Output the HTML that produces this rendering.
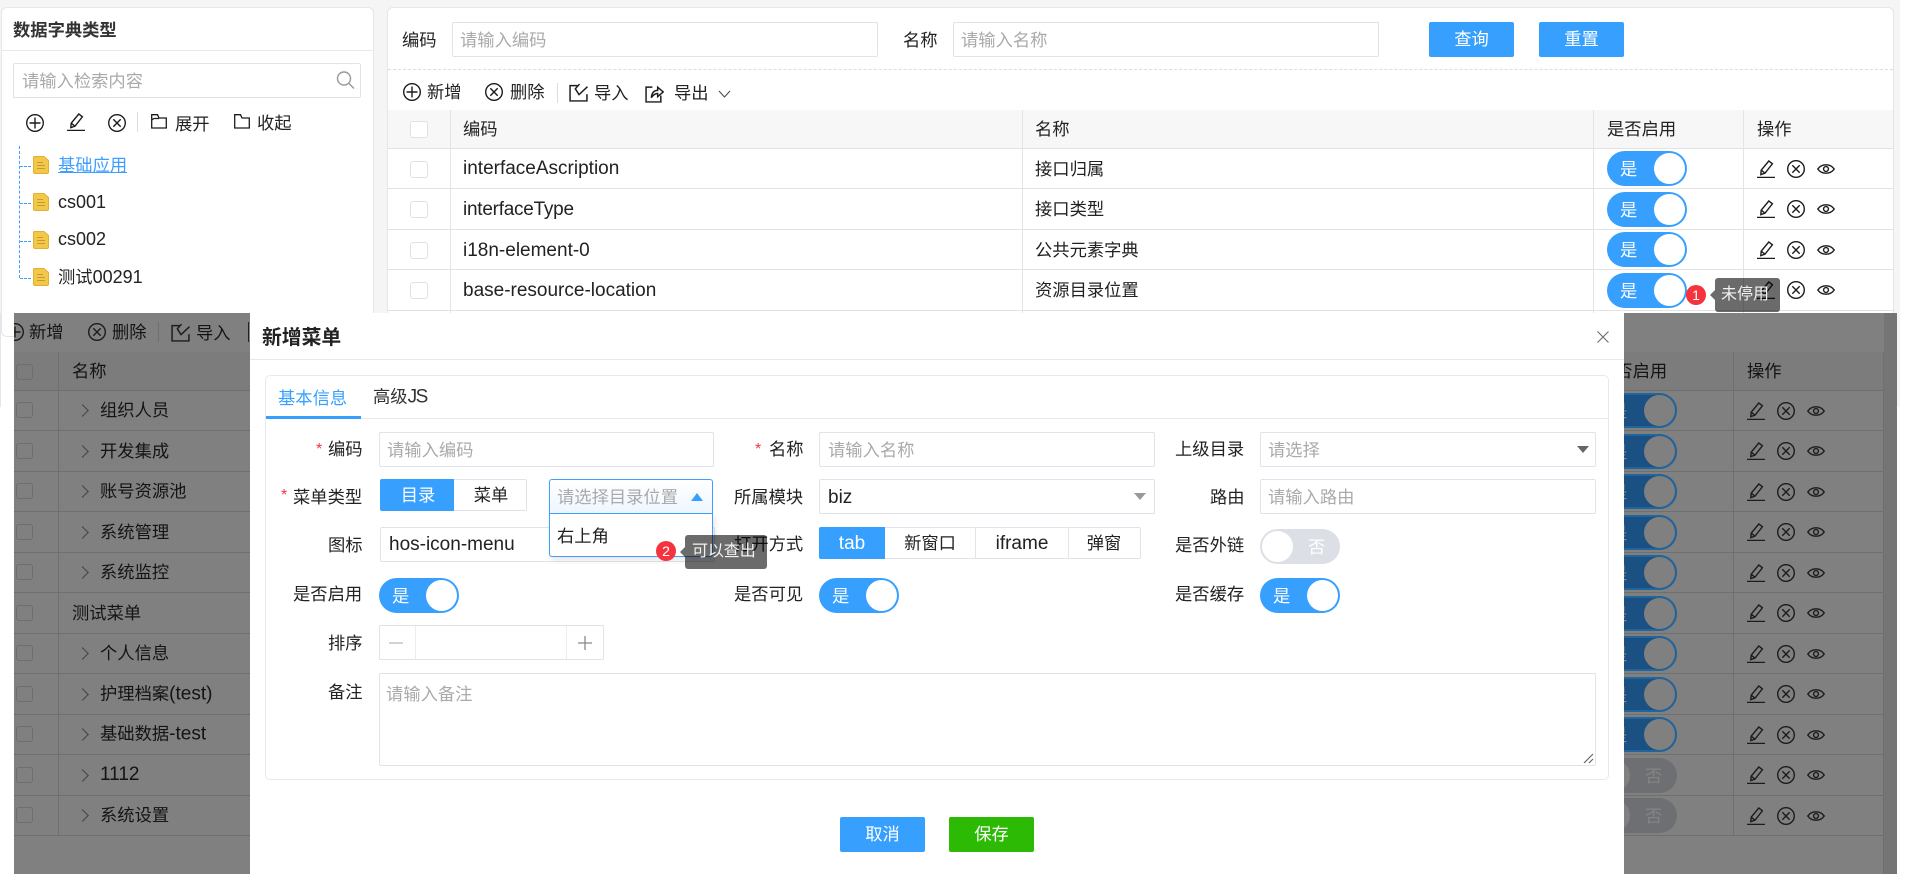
<!DOCTYPE html>
<html lang="zh-CN"><head><meta charset="utf-8"><title>数据字典类型</title>
<style>
html,body{margin:0;padding:0;width:1920px;height:874px;overflow:hidden;background:#fff}
body{position:relative;font-family:"Liberation Sans","Noto Sans CJK SC",sans-serif;font-size:17.3px;color:#222}
div,svg{position:absolute;box-sizing:border-box}
.t{white-space:nowrap;line-height:20px;transform:translateY(-50%)}
.c{transform:translate(-50%,-50%)}
.p{color:#aaa}
.l{font-size:19px}
.t.l{margin-top:1px}
.d{font-size:18px}
.card{background:#fff;border:1px solid #e4e6ec;border-radius:6px}
.in{background:#fff;border:1px solid #e1e2ea;border-radius:2px}
.btn{background:#37a0ff;border-radius:2px;height:35px;width:85px;color:#fff;text-align:center;line-height:35px}
.hl{height:1px;background:#e2e2e2}
.vl{width:1px;background:#e4e4e4}
.cb{width:18px;height:17px;border:1px solid #e2e2e2;border-radius:3px;background:#fff}
.i{width:18px;height:18px;overflow:visible;fill:none;stroke:#1c1c1c;stroke-width:1.4}
.sw{width:80px;height:35px;border-radius:18px;background:#37a0ff}
.sw i{position:absolute;right:2px;top:2px;width:31px;height:31px;border-radius:50%;background:#fff}
.sw b{position:absolute;left:13px;top:0;line-height:36px;font-weight:400;color:#fff}
.sd{background:#1b5182;box-shadow:inset 0 0 0 2px #22649c}
.sd i{background:#808080}
.sd b{color:#888}
.so{background:#6e6f73}
.so i{background:#808080;left:2px;right:auto}
.so b{left:48px;color:#858585}
.hd{height:1px;background:#6f6f6f}
.vd{width:1px;background:#6f6f6f}
.cd{width:17px;height:16px;border:1px solid #6e6e6e;border-radius:3px}
.ar{width:9px;height:9px;border-top:1px solid #444;border-right:1px solid #444;transform:rotate(45deg)}
.tip{background:rgba(0,0,0,.58);border-radius:3px}
.tip:before{content:"";position:absolute;left:-5px;top:50%;margin-top:-5px;border:5px solid transparent;border-left:0;border-right-color:rgba(0,0,0,.58)}
.bad{width:20px;height:20px;border-radius:50%;background:#f5333f;color:#fff;text-align:center;line-height:20px;font-size:14px}
.red{color:#f5333f}
</style></head><body>
<svg width="0" height="0" style="left:0;top:0">
<symbol id="plus" viewBox="0 0 18 18"><circle cx="9" cy="9" r="8.3"/><path d="M9 3.5V14.5M3.5 9H14.5"/></symbol>
<symbol id="x" viewBox="0 0 18 18"><circle cx="9" cy="9" r="8.3"/><path d="M5.3 5.3L12.7 12.7M12.7 5.300L5.300 12.700"/></symbol>
<symbol id="pen" viewBox="0 0 18 18"><path d="M3.800 14.600L4.200 10.200L11.800 1L15.400 3.800L8 13.200ZM4.200 10.200L8 13.200"/><path d="M0 17.400H18"/></symbol>
<symbol id="eye" viewBox="0 0 18 18"><path d="M.8 9C4.600 3.400 13.400 3.400 17.200 9C13.400 14.600 4.600 14.600 .8 9Z"/><circle cx="9" cy="9" r="2.400"/></symbol>
<symbol id="fo" viewBox="0 0 16 16"><path d="M.7 1.700H6.500L8 5H15.300V15H.7ZM.7 7L3 5.500H8"/></symbol>
<symbol id="fc" viewBox="0 0 16 16"><path d="M.7 1.700H6.500L8 5H15.300V15H.7Z"/></symbol>
<symbol id="imp" viewBox="0 0 18 18"><path d="M8 2.500H1V17H17V10.500"/><path d="M10 1L6 5.500L9.500 11L17.500 3.500"/></symbol>
<symbol id="exp" viewBox="0 0 18 18"><path d="M7 3H1V17H15V11"/><path d="M6 13C6.500 8 9 6 12 6V3L17.300 7.500L12 12V9C10 9 8 10 6 13Z"/></symbol>
<symbol id="doc" viewBox="0 0 16 18"><path d="M1.500 .5H11L15.500 4.500V16C15.500 17 15 17.500 14 17.500H2C1 17.500 .5 17 .5 16V1.500C.5 1 1 .5 1.500 .5Z" fill="#f2c84b" stroke="#e3b030"/><path d="M4 6.500H10M4 9.500H12M4 12.500H12" stroke="#c79a2a" stroke-width="1"/></symbol>
</svg>

<!-- page background -->
<div style="left:0;top:0;width:1900px;height:313px;background:#f5f5f5"></div>
<div style="left:1897px;top:313px;width:3px;height:94px;background:#f5f5f5"></div>
<div style="left:0;top:313px;width:1px;height:94px;background:#e4e6ec"></div>

<!-- left card -->
<div class="card" style="left:1px;top:7px;width:373px;height:330px"></div>
<div class="t" style="left:13px;top:30px;font-weight:700;color:#333;">数据字典类型</div>
<div style="left:1px;top:50px;width:373px;height:1px;background:#e8e9ee"></div>
<div class="in" style="left:13px;top:63px;width:348px;height:35px"></div>
<div class="t p" style="left:22px;top:81px">请输入检索内容</div>
<svg style="left:336px;top:71px;width:19px;height:18px;fill:none;stroke:#999;stroke-width:1.400"><circle cx="8" cy="7.500" r="6.500"/><path d="M12.500 12L18 17.500"/></svg>
<svg class="i" style="left:26px;top:114px"><use href="#plus"/></svg>
<svg class="i" style="left:67px;top:113px"><use href="#pen"/></svg>
<svg class="i" style="left:108px;top:114px"><use href="#x"/></svg>
<div class="vl" style="left:137px;top:112px;height:20px;background:#ddd"></div>
<svg class="i" style="left:151px;top:113px;width:16px;height:16px;stroke-width:1.300"><use href="#fo"/></svg>
<div class="t" style="left:175px;top:124px">展开</div>
<svg class="i" style="left:234px;top:113px;width:16px;height:16px;stroke-width:1.300"><use href="#fc"/></svg>
<div class="t" style="left:257px;top:123px">收起</div>
<div style="left:19px;top:146px;width:1px;height:132px;border-left:1px dashed #409eff"></div>
<div style="left:20px;top:166px;width:11px;border-top:1px dashed #409eff"></div>
<div style="left:20px;top:203px;width:11px;border-top:1px dashed #409eff"></div>
<div style="left:20px;top:241px;width:11px;border-top:1px dashed #409eff"></div>
<div style="left:20px;top:278px;width:11px;border-top:1px dashed #409eff"></div>
<svg style="left:33px;top:156px;width:16px;height:18px"><use href="#doc"/></svg>
<svg style="left:33px;top:193px;width:16px;height:18px"><use href="#doc"/></svg>
<svg style="left:33px;top:231px;width:16px;height:18px"><use href="#doc"/></svg>
<svg style="left:33px;top:268px;width:16px;height:18px"><use href="#doc"/></svg>
<div class="t" style="left:58px;top:165px;color:#409eff;text-decoration:underline">基础应用</div>
<div class="t d" style="left:58px;top:202px">cs001</div>
<div class="t d" style="left:58px;top:239px">cs002</div>
<div class="t" style="left:58px;top:277px">测试<span class="d">00291</span></div>

<!-- right card -->
<div class="card" style="left:387px;top:7px;width:1507px;height:330px"></div>
<div class="t" style="left:402px;top:40px">编码</div>
<div class="in" style="left:452px;top:22px;width:426px;height:35px"></div>
<div class="t p" style="left:460px;top:40px">请输入编码</div>
<div class="t" style="left:903px;top:40px">名称</div>
<div class="in" style="left:953px;top:22px;width:426px;height:35px"></div>
<div class="t p" style="left:961px;top:40px">请输入名称</div>
<div class="btn" style="left:1429px;top:22px">查询</div>
<div class="btn" style="left:1539px;top:22px">重置</div>
<div style="left:388px;top:69px;width:1505px;border-top:1px dashed #ddd"></div>
<svg class="i" style="left:403px;top:83px"><use href="#plus"/></svg>
<div class="t" style="left:427px;top:92px">新增</div>
<svg class="i" style="left:485px;top:83px"><use href="#x"/></svg>
<div class="t" style="left:510px;top:92px">删除</div>
<div class="vl" style="left:557px;top:83px;height:20px;background:#ddd"></div>
<svg class="i" style="left:569px;top:83px;width:19px;height:19px"><use href="#imp"/></svg>
<div class="t" style="left:594px;top:93px">导入</div>
<svg class="i" style="left:645px;top:84px;width:19px;height:19px"><use href="#exp"/></svg>
<div class="t" style="left:674px;top:93px">导出</div>
<svg style="left:718px;top:90px;width:13px;height:8px;fill:none;stroke:#444;stroke-width:1"><path d="M1 1L6.500 7L12 1"/></svg>

<!-- top table -->
<div style="left:388px;top:110px;width:1506px;height:38px;background:#f7f7f7"></div>
<div class="hl" style="left:388px;top:148px;width:1506px"></div>
<div class="hl" style="left:388px;top:188px;width:1506px"></div>
<div class="hl" style="left:388px;top:229px;width:1506px"></div>
<div class="hl" style="left:388px;top:269px;width:1506px"></div>
<div class="hl" style="left:388px;top:310px;width:1506px"></div>
<div class="vl" style="left:450px;top:110px;height:203px"></div>
<div class="vl" style="left:1022px;top:110px;height:203px"></div>
<div class="vl" style="left:1593px;top:110px;height:203px"></div>
<div class="vl" style="left:1743px;top:110px;height:203px"></div>
<div class="vl" style="left:1893px;top:110px;height:203px"></div>
<div class="cb" style="left:410px;top:121px"></div>
<div class="cb" style="left:410px;top:161px"></div>
<div class="cb" style="left:410px;top:201px"></div>
<div class="cb" style="left:410px;top:242px"></div>
<div class="cb" style="left:410px;top:282px"></div>
<div class="t" style="left:463px;top:129px">编码</div>
<div class="t" style="left:1035px;top:129px">名称</div>
<div class="t" style="left:1607px;top:129px">是否启用</div>
<div class="t" style="left:1757px;top:129px">操作</div>
<div class="t l" style="left:463px;top:168px">interfaceAscription</div>
<div class="t l" style="left:463px;top:209px;letter-spacing:-.25px">interfaceType</div>
<div class="t l" style="left:463px;top:250px">i18n-element-0</div>
<div class="t l" style="left:463px;top:290px">base-resource-location</div>
<div class="t" style="left:1035px;top:169px">接口归属</div>
<div class="t" style="left:1035px;top:209px">接口类型</div>
<div class="t" style="left:1035px;top:250px">公共元素字典</div>
<div class="t" style="left:1035px;top:290px">资源目录位置</div>
<div class="sw" style="left:1607px;top:151px"><b>是</b><i></i></div>
<div class="sw" style="left:1607px;top:192px"><b>是</b><i></i></div>
<div class="sw" style="left:1607px;top:232px"><b>是</b><i></i></div>
<div class="sw" style="left:1607px;top:273px"><b>是</b><i></i></div>
<svg class="i" style="left:1757px;top:160px"><use href="#pen"/></svg><svg class="i" style="left:1787px;top:160px"><use href="#x"/></svg><svg class="i" style="left:1817px;top:160px"><use href="#eye"/></svg>
<svg class="i" style="left:1757px;top:200px"><use href="#pen"/></svg><svg class="i" style="left:1787px;top:200px"><use href="#x"/></svg><svg class="i" style="left:1817px;top:200px"><use href="#eye"/></svg>
<svg class="i" style="left:1757px;top:241px"><use href="#pen"/></svg><svg class="i" style="left:1787px;top:241px"><use href="#x"/></svg><svg class="i" style="left:1817px;top:241px"><use href="#eye"/></svg>
<svg class="i" style="left:1757px;top:281px"><use href="#pen"/></svg><svg class="i" style="left:1787px;top:281px"><use href="#x"/></svg><svg class="i" style="left:1817px;top:281px"><use href="#eye"/></svg>
<div class="bad" style="left:1686px;top:285px">1</div>
<div class="tip" style="left:1715px;top:278px;width:65px;height:34px"></div>
<div class="t" style="left:1721px;top:295px;color:#f2f2f2;font-size:16px">未停用</div>

<!-- dark overlay snapshot -->
<div style="left:14px;top:313px;width:1883px;height:561px;background:#808080;overflow:hidden">
<div style="left:-14px;top:-313px;width:1920px;height:874px;color:#141414">
<div style="left:1884px;top:313px;width:13px;height:561px;background:#757575"></div>
<div style="left:14px;top:352px;width:1869px;height:38px;background:#7c7c7c"></div>
<svg class="i" style="left:6px;top:323px"><use href="#plus"/></svg>
<div class="t" style="left:29px;top:332px">新增</div>
<svg class="i" style="left:88px;top:323px"><use href="#x"/></svg>
<div class="t" style="left:112px;top:332px">删除</div>
<div class="vd" style="left:158px;top:322px;height:20px"></div>
<svg class="i" style="left:171px;top:323px;width:19px;height:19px"><use href="#imp"/></svg>
<div class="t" style="left:196px;top:333px">导入</div>
<div class="vd" style="left:248px;top:322px;height:20px;background:#222"></div>
<div class="hd" style="left:14px;top:390px;width:1869px"></div>
<div class="hd" style="left:14px;top:430px;width:1869px"></div>
<div class="hd" style="left:14px;top:471px;width:1869px"></div>
<div class="hd" style="left:14px;top:511px;width:1869px"></div>
<div class="hd" style="left:14px;top:552px;width:1869px"></div>
<div class="hd" style="left:14px;top:592px;width:1869px"></div>
<div class="hd" style="left:14px;top:633px;width:1869px"></div>
<div class="hd" style="left:14px;top:673px;width:1869px"></div>
<div class="hd" style="left:14px;top:714px;width:1869px"></div>
<div class="hd" style="left:14px;top:754px;width:1869px"></div>
<div class="hd" style="left:14px;top:795px;width:1869px"></div>
<div class="hd" style="left:14px;top:835px;width:1869px"></div>
<div class="vd" style="left:58px;top:352px;height:483px"></div>
<div class="vd" style="left:1733px;top:352px;height:483px"></div>
<div class="vd" style="left:1883px;top:352px;height:522px"></div>
<div class="cd" style="left:16px;top:364px"></div>
<div class="cd" style="left:16px;top:402px"></div>
<div class="cd" style="left:16px;top:443px"></div>
<div class="cd" style="left:16px;top:483px"></div>
<div class="cd" style="left:16px;top:524px"></div>
<div class="cd" style="left:16px;top:564px"></div>
<div class="cd" style="left:16px;top:605px"></div>
<div class="cd" style="left:16px;top:645px"></div>
<div class="cd" style="left:16px;top:686px"></div>
<div class="cd" style="left:16px;top:726px"></div>
<div class="cd" style="left:16px;top:767px"></div>
<div class="cd" style="left:16px;top:807px"></div>
<div class="t" style="left:72px;top:371px">名称</div>
<div class="t" style="left:1598px;top:371px">是否启用</div>
<div class="t" style="left:1747px;top:371px">操作</div>
<div class="ar" style="left:78px;top:406px"></div><div class="t" style="left:100px;top:410px">组织人员</div>
<div class="ar" style="left:78px;top:447px"></div><div class="t" style="left:100px;top:451px">开发集成</div>
<div class="ar" style="left:78px;top:487px"></div><div class="t" style="left:100px;top:491px">账号资源池</div>
<div class="ar" style="left:78px;top:528px"></div><div class="t" style="left:100px;top:532px">系统管理</div>
<div class="ar" style="left:78px;top:568px"></div><div class="t" style="left:100px;top:572px">系统监控</div>
<div class="t" style="left:72px;top:613px">测试菜单</div>
<div class="ar" style="left:78px;top:649px"></div><div class="t" style="left:100px;top:653px">个人信息</div>
<div class="ar" style="left:78px;top:690px"></div><div class="t" style="left:100px;top:694px">护理档案<span class="l">(test)</span></div>
<div class="ar" style="left:78px;top:730px"></div><div class="t" style="left:100px;top:734px">基础数据<span class="l">-test</span></div>
<div class="ar" style="left:78px;top:771px"></div><div class="t l" style="left:100px;top:774px">1112</div>
<div class="ar" style="left:78px;top:811px"></div><div class="t" style="left:100px;top:815px">系统设置</div>
<div class="sw sd" style="left:1597px;top:393px"><b>是</b><i></i></div>
<div class="sw sd" style="left:1597px;top:434px"><b>是</b><i></i></div>
<div class="sw sd" style="left:1597px;top:474px"><b>是</b><i></i></div>
<div class="sw sd" style="left:1597px;top:515px"><b>是</b><i></i></div>
<div class="sw sd" style="left:1597px;top:555px"><b>是</b><i></i></div>
<div class="sw sd" style="left:1597px;top:596px"><b>是</b><i></i></div>
<div class="sw sd" style="left:1597px;top:636px"><b>是</b><i></i></div>
<div class="sw sd" style="left:1597px;top:677px"><b>是</b><i></i></div>
<div class="sw sd" style="left:1597px;top:717px"><b>是</b><i></i></div>
<div class="sw so" style="left:1597px;top:758px"><b>否</b><i></i></div>
<div class="sw so" style="left:1597px;top:798px"><b>否</b><i></i></div>
<svg class="i" style="left:1747px;top:402px"><use href="#pen"/></svg><svg class="i" style="left:1777px;top:402px"><use href="#x"/></svg><svg class="i" style="left:1807px;top:402px"><use href="#eye"/></svg>
<svg class="i" style="left:1747px;top:442px"><use href="#pen"/></svg><svg class="i" style="left:1777px;top:442px"><use href="#x"/></svg><svg class="i" style="left:1807px;top:442px"><use href="#eye"/></svg>
<svg class="i" style="left:1747px;top:483px"><use href="#pen"/></svg><svg class="i" style="left:1777px;top:483px"><use href="#x"/></svg><svg class="i" style="left:1807px;top:483px"><use href="#eye"/></svg>
<svg class="i" style="left:1747px;top:523px"><use href="#pen"/></svg><svg class="i" style="left:1777px;top:523px"><use href="#x"/></svg><svg class="i" style="left:1807px;top:523px"><use href="#eye"/></svg>
<svg class="i" style="left:1747px;top:564px"><use href="#pen"/></svg><svg class="i" style="left:1777px;top:564px"><use href="#x"/></svg><svg class="i" style="left:1807px;top:564px"><use href="#eye"/></svg>
<svg class="i" style="left:1747px;top:604px"><use href="#pen"/></svg><svg class="i" style="left:1777px;top:604px"><use href="#x"/></svg><svg class="i" style="left:1807px;top:604px"><use href="#eye"/></svg>
<svg class="i" style="left:1747px;top:645px"><use href="#pen"/></svg><svg class="i" style="left:1777px;top:645px"><use href="#x"/></svg><svg class="i" style="left:1807px;top:645px"><use href="#eye"/></svg>
<svg class="i" style="left:1747px;top:685px"><use href="#pen"/></svg><svg class="i" style="left:1777px;top:685px"><use href="#x"/></svg><svg class="i" style="left:1807px;top:685px"><use href="#eye"/></svg>
<svg class="i" style="left:1747px;top:726px"><use href="#pen"/></svg><svg class="i" style="left:1777px;top:726px"><use href="#x"/></svg><svg class="i" style="left:1807px;top:726px"><use href="#eye"/></svg>
<svg class="i" style="left:1747px;top:766px"><use href="#pen"/></svg><svg class="i" style="left:1777px;top:766px"><use href="#x"/></svg><svg class="i" style="left:1807px;top:766px"><use href="#eye"/></svg>
<svg class="i" style="left:1747px;top:807px"><use href="#pen"/></svg><svg class="i" style="left:1777px;top:807px"><use href="#x"/></svg><svg class="i" style="left:1807px;top:807px"><use href="#eye"/></svg>
</div></div>

<!-- modal -->
<div style="left:250px;top:313px;width:1374px;height:561px;background:#fff"></div>
<div class="t" style="left:262px;top:338px;font-size:19.800px;font-weight:700;color:#222">新增菜单</div>
<svg style="left:1597px;top:331px;width:12px;height:12px;fill:none;stroke:#666;stroke-width:1"><path d="M.5 .5L11.500 11.500M11.500 .5L.5 11.500"/></svg>
<div style="left:250px;top:359px;width:1374px;height:1px;background:#e8e9ee"></div>
<div style="left:265px;top:375px;width:1344px;height:405px;border:1px solid #e8e9ee;border-radius:5px"></div>
<div style="left:266px;top:418px;width:1342px;height:1px;background:#e8e9ee"></div>
<div style="left:266px;top:416px;width:95px;height:3px;background:#37a0ff"></div>
<div class="t" style="left:278px;top:398px;color:#37a0ff">基本信息</div>
<div class="t" style="left:373px;top:397px;color:#333">高级<span class="l" style="letter-spacing:-1.500px">JS</span></div>

<!-- form labels -->
<div class="t red" style="left:316px;top:450px;font-size:16px">*</div><div class="t" style="left:328px;top:449px">编码</div>
<div class="t red" style="left:755px;top:450px;font-size:16px">*</div><div class="t" style="left:769px;top:449px">名称</div>
<div class="t" style="left:1175px;top:449px">上级目录</div>
<div class="t red" style="left:281px;top:496px;font-size:16px">*</div><div class="t" style="left:293px;top:497px">菜单类型</div>
<div class="t" style="left:734px;top:497px">所属模块</div>
<div class="t" style="left:1210px;top:497px">路由</div>
<div class="t" style="left:328px;top:545px">图标</div>
<div class="t" style="left:1175px;top:545px">是否外链</div>
<div class="t" style="left:293px;top:594px">是否启用</div>
<div class="t" style="left:734px;top:594px">是否可见</div>
<div class="t" style="left:1175px;top:594px">是否缓存</div>
<div class="t" style="left:328px;top:643px">排序</div>
<div class="t" style="left:328px;top:692px">备注</div>

<!-- row 1 -->
<div class="in" style="left:379px;top:432px;width:335px;height:35px"></div>
<div class="t p" style="left:387px;top:450px">请输入编码</div>
<div class="in" style="left:819px;top:432px;width:336px;height:35px"></div>
<div class="t p" style="left:828px;top:450px">请输入名称</div>
<div class="in" style="left:1260px;top:432px;width:336px;height:35px"></div>
<div class="t p" style="left:1268px;top:450px">请选择</div>
<svg style="left:1577px;top:446px;width:12px;height:7px;fill:#666"><path d="M0 0H12L6 7Z"/></svg>

<!-- row 2 -->
<div class="in" style="left:380px;top:479px;width:147px;height:32px"></div>
<div style="left:380px;top:479px;width:74px;height:32px;background:#37a0ff;border-radius:2px 0 0 2px"></div>
<div class="t c" style="left:418px;top:495px;color:#fff">目录</div>
<div class="t c" style="left:491px;top:495px">菜单</div>
<div class="in" style="left:819px;top:479px;width:336px;height:35px"></div>
<div class="t l" style="left:828px;top:497px">biz</div>
<svg style="left:1134px;top:493px;width:12px;height:7px;fill:#999"><path d="M0 0H12L6 7Z"/></svg>
<div class="in" style="left:1260px;top:479px;width:336px;height:35px"></div>
<div class="t p" style="left:1268px;top:497px">请输入路由</div>

<!-- row 3 -->
<div class="in" style="left:380px;top:527px;width:335px;height:35px"></div>
<div class="t l" style="left:389px;top:544px">hos-icon-menu</div>
<div class="in" style="left:819px;top:527px;width:322px;height:32px"></div>
<div style="left:819px;top:527px;width:66px;height:32px;background:#37a0ff;border-radius:2px 0 0 2px"></div>
<div class="vl" style="left:975px;top:527px;height:32px"></div>
<div class="vl" style="left:1068px;top:527px;height:32px"></div>
<div class="t c l" style="left:852px;top:543px;color:#fff">tab</div>
<div class="t c" style="left:930px;top:543px">新窗口</div>
<div class="t c l" style="left:1022px;top:543px">iframe</div>
<div class="t c" style="left:1104px;top:543px">弹窗</div>
<div class="sw" style="left:1260px;top:529px;background:#dcdfe6"><b style="left:48px">否</b><i style="left:2px;right:auto"></i></div>

<!-- row 4 -->
<div class="sw" style="left:379px;top:578px"><b>是</b><i></i></div>
<div class="sw" style="left:819px;top:578px"><b>是</b><i></i></div>
<div class="sw" style="left:1260px;top:578px"><b>是</b><i></i></div>

<!-- number -->
<div class="in" style="left:379px;top:625px;width:225px;height:35px"></div>
<div class="vl" style="left:415px;top:626px;height:33px;background:#ececf1"></div>
<div class="vl" style="left:566px;top:626px;height:33px;background:#ececf1"></div>
<svg style="left:389px;top:636px;width:14px;height:14px;stroke:#bbb;stroke-width:1.300"><path d="M0 7H14"/></svg>
<svg style="left:578px;top:636px;width:14px;height:14px;stroke:#888;stroke-width:1.300"><path d="M0 7H14M7 0V14"/></svg>

<!-- textarea -->
<div class="in" style="left:379px;top:673px;width:1217px;height:93px"></div>
<div class="t p" style="left:386px;top:694px">请输入备注</div>
<svg style="left:1583px;top:753px;width:11px;height:11px;stroke:#666;stroke-width:1.200"><path d="M1 10L10 1M6 10L10 6"/></svg>

<!-- open select + dropdown -->
<div style="left:549px;top:479px;width:164px;height:35px;border:1px solid #409eff;border-radius:3px 3px 0 0;background:linear-gradient(#fff,#eef6ff)"></div>
<div class="t p" style="left:557px;top:497px">请选择目录位置</div>
<svg style="left:691px;top:493px;width:12px;height:8px;fill:#37a0ff"><path d="M0 8H12L6 0Z"/></svg>
<div style="left:549px;top:513px;width:164px;height:44px;background:#fff;border:1px solid #409eff;border-radius:0 0 3px 3px;box-shadow:2px 3px 6px rgba(0,0,0,.1)"></div>
<div class="t" style="left:557px;top:536px">右上角</div>

<!-- tooltip 2 -->
<div class="t" style="left:734px;top:544px">打开方式</div>
<div class="tip" style="left:685px;top:535px;width:82px;height:34px"></div>
<div class="t" style="left:692px;top:552px;color:#f2f2f2;font-size:16px;letter-spacing:-.1px">可以查出</div>
<div class="bad" style="left:656px;top:541px">2</div>

<!-- footer -->
<div class="btn" style="left:840px;top:817px">取消</div>
<div class="btn" style="left:949px;top:817px;background:#2cba05">保存</div>
</body></html>
